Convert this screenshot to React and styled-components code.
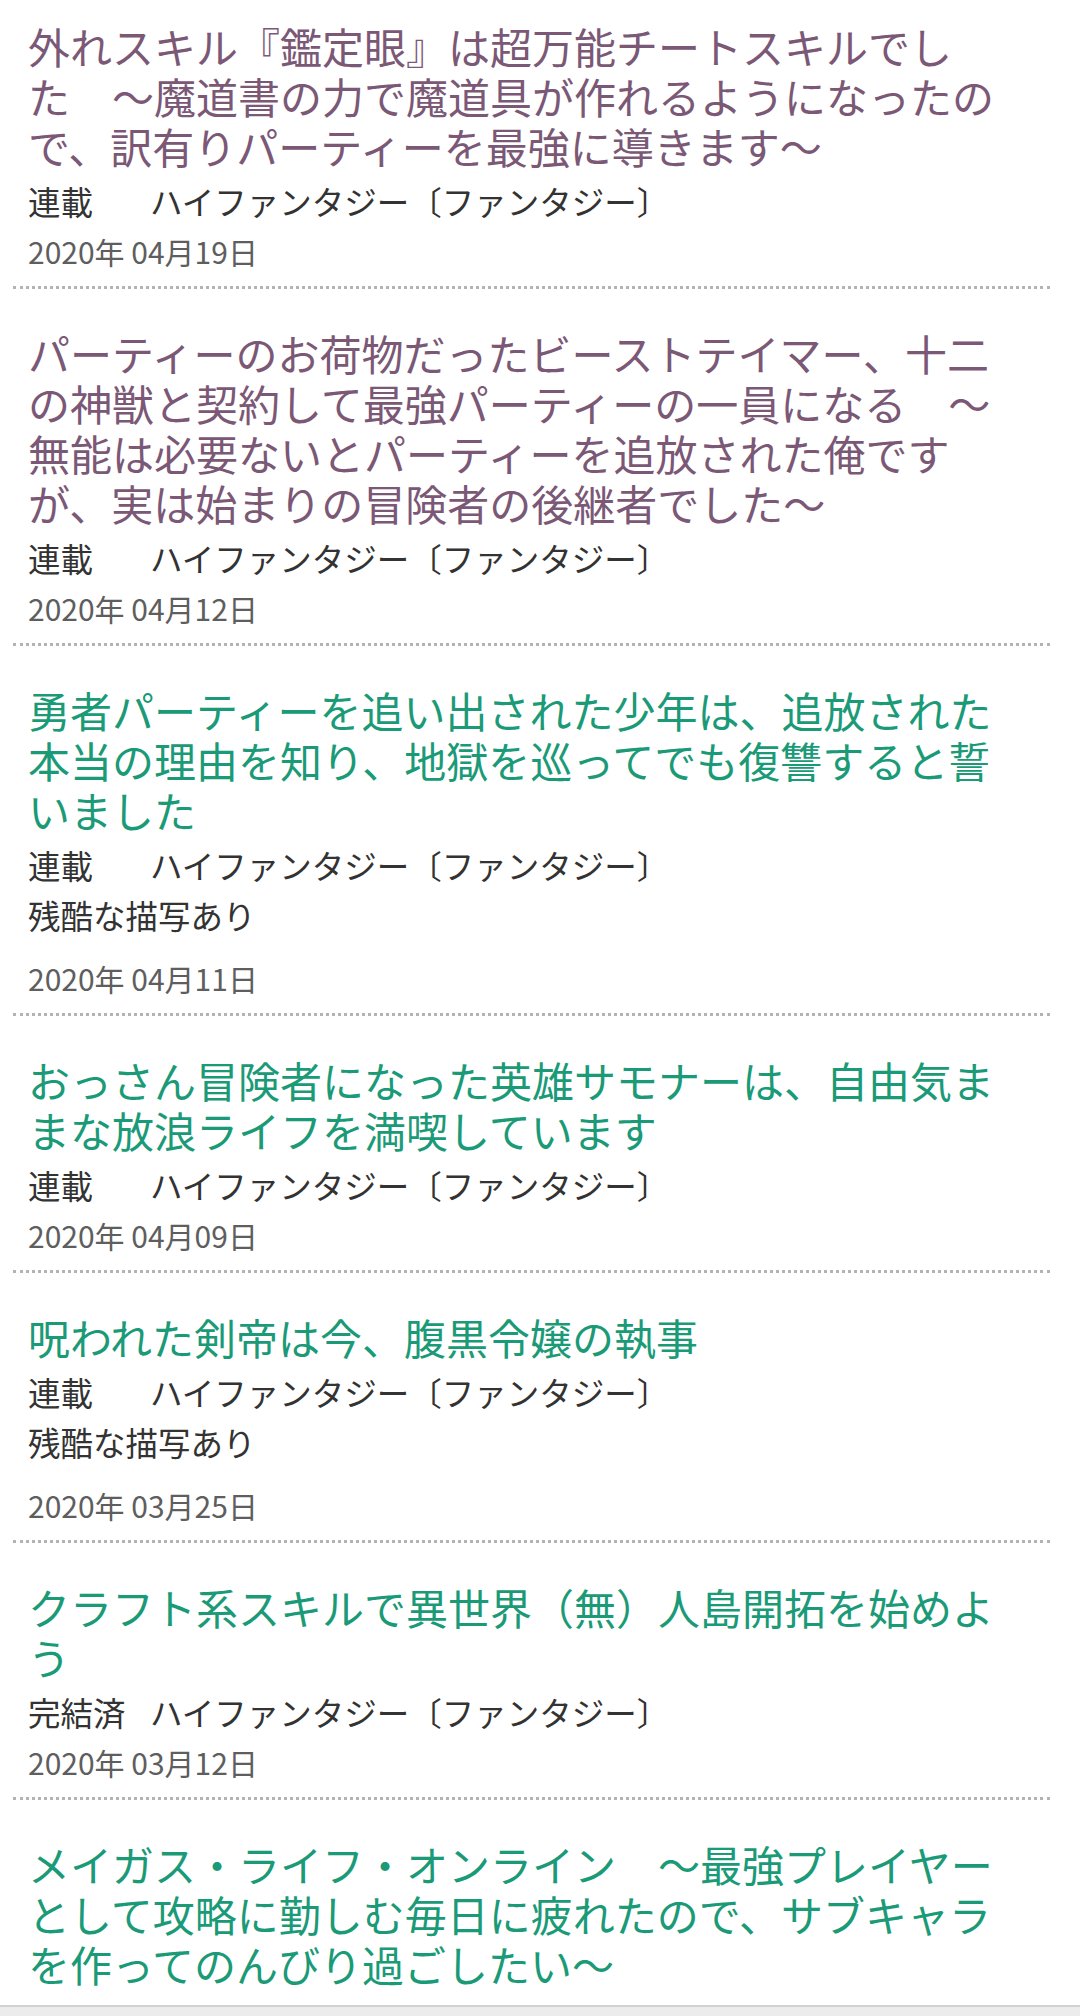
import React from "react";
import styled, { createGlobalStyle } from "styled-components";

const GlobalStyle = createGlobalStyle`
  html, body {
    margin: 0;
    padding: 0;
    background: #ffffff;
  }
  body {
    font-family: "Noto Sans CJK JP", "Noto Sans", sans-serif;
    -webkit-font-smoothing: antialiased;
  }
  * { box-sizing: border-box; }
`;

const List = styled.ul`
  list-style: none;
  margin: 0;
  padding: 0 30px 0 13px;
`;

const Item = styled.li`
  padding: 39px 30px 10px 15px;
  border-bottom: 3px dotted #b3b3b3;
  &:first-child {
    padding-top: 21px;
  }
`;

const Title = styled.a`
  display: block;
  font-size: 42px;
  line-height: 50px;
  text-decoration: none;
  white-space: break-spaces;
  color: ${(p) => (p.$visited ? "#7b5876" : "#1a9a77")};
`;

const Meta = styled.div`
  margin-top: 5px;
  font-size: 32.5px;
  line-height: 50px;
  color: #333333;
  white-space: nowrap;
`;

const Label = styled.span`
  display: inline-block;
  width: 122px;
`;

const Tag = styled.div`
  font-size: 32.5px;
  line-height: 50px;
  color: #333333;
  margin-bottom: 13px;
`;

const DateLine = styled.div`
  font-size: 30px;
  line-height: 50px;
  color: #5e5e5e;
`;

const BottomBar = styled.div`
  position: fixed;
  left: 0;
  right: 0;
  bottom: 0;
  height: 11px;
  background: #ececec;
  border-top: 2px solid #d2d2d2;
`;

const novels = [
  {
    title:
      "外れスキル『鑑定眼』は超万能チートスキルでした　～魔道書の力で魔道具が作れるようになったので、訳有りパーティーを最強に導きます～",
    status: "連載",
    genre: "ハイファンタジー〔ファンタジー〕",
    date: "2020年 04月19日",
    visited: true,
  },
  {
    title:
      "パーティーのお荷物だったビーストテイマー、十二の神獣と契約して最強パーティーの一員になる　～無能は必要ないとパーティーを追放された俺ですが、実は始まりの冒険者の後継者でした～",
    status: "連載",
    genre: "ハイファンタジー〔ファンタジー〕",
    date: "2020年 04月12日",
    visited: true,
  },
  {
    title:
      "勇者パーティーを追い出された少年は、追放された本当の理由を知り、地獄を巡ってでも復讐すると誓いました",
    status: "連載",
    genre: "ハイファンタジー〔ファンタジー〕",
    tag: "残酷な描写あり",
    date: "2020年 04月11日",
  },
  {
    title:
      "おっさん冒険者になった英雄サモナーは、自由気ままな放浪ライフを満喫しています",
    status: "連載",
    genre: "ハイファンタジー〔ファンタジー〕",
    date: "2020年 04月09日",
  },
  {
    title: "呪われた剣帝は今、腹黒令嬢の執事",
    status: "連載",
    genre: "ハイファンタジー〔ファンタジー〕",
    tag: "残酷な描写あり",
    date: "2020年 03月25日",
  },
  {
    title: "クラフト系スキルで異世界（無）人島開拓を始めよう",
    status: "完結済",
    genre: "ハイファンタジー〔ファンタジー〕",
    date: "2020年 03月12日",
  },
  {
    title:
      "メイガス・ライフ・オンライン　～最強プレイヤーとして攻略に勤しむ毎日に疲れたので、サブキャラを作ってのんびり過ごしたい～",
    status: "連載",
    genre: "ハイファンタジー〔ファンタジー〕",
    date: "2020年 03月05日",
  },
];

export default function App() {
  return (
    <>
      <GlobalStyle />
      <List>
        {novels.map((n, i) => (
          <Item key={i}>
            <Title href="#" $visited={n.visited}>
              {n.title}
            </Title>
            <Meta>
              <Label>{n.status}</Label>
              {n.genre}
            </Meta>
            {n.tag && <Tag>{n.tag}</Tag>}
            <DateLine>{n.date}</DateLine>
          </Item>
        ))}
      </List>
      <BottomBar />
    </>
  );
}
